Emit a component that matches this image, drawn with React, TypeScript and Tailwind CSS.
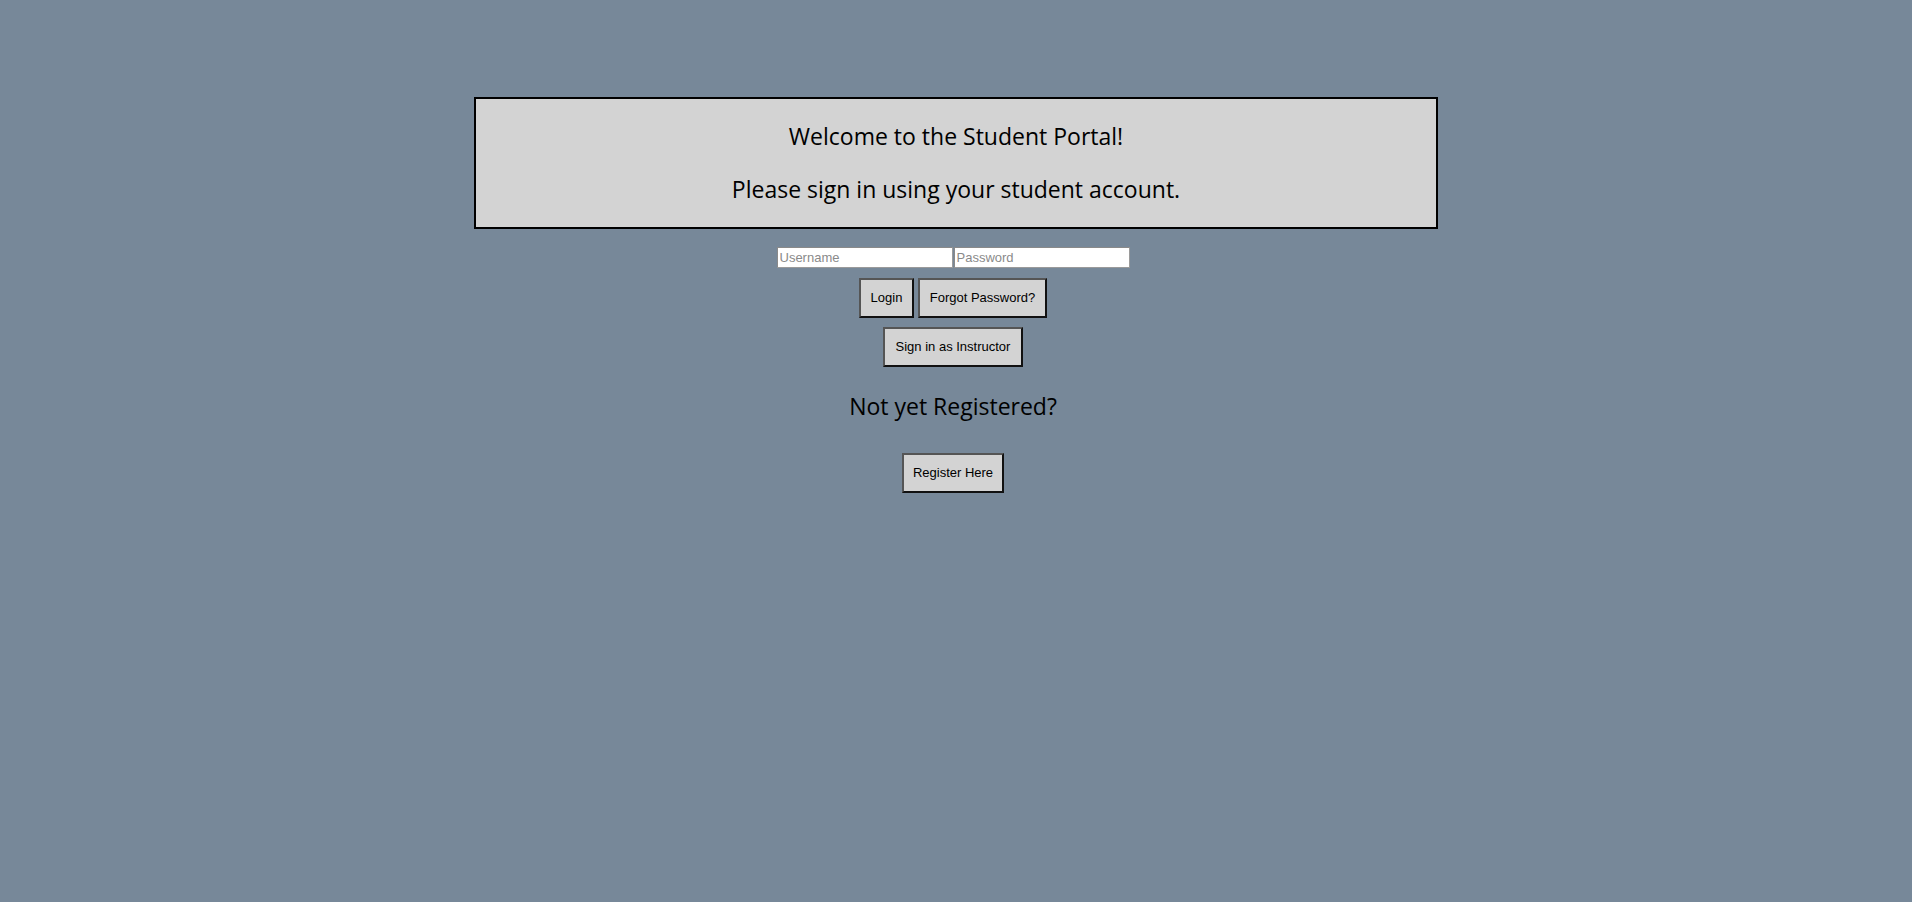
import React from "react";

export default function App() {
  const btn =
    "bg-[#d3d3d3] text-black text-[13px] px-[6px] h-[40px] border-2 border-t-[#555] border-l-[#555] border-b-[#111] border-r-[#111] font-['Liberation_Sans',Arial,sans-serif] whitespace-nowrap";
  const inp =
    "w-[176px] h-[21px] bg-white border border-t-[#8a8a8a] border-l-[#8a8a8a] border-b-[#9a9a9a] border-r-[#9a9a9a] px-[2px] text-[13px] font-['Liberation_Sans',Arial,sans-serif] placeholder:text-[#8a8a8a] outline-none";
  return (
    <div className="min-h-screen w-full bg-[#778899] pt-[97px] font-['Open_Sans','DejaVu_Sans',sans-serif]">
      <div className="mx-auto w-[964px] h-[132px] border-2 border-black bg-[#d3d3d3] text-center text-[23px] text-black flex flex-col items-center pt-[24px]">
        <p className="leading-[26px]">Welcome to the Student Portal!</p>
        <p className="leading-[26px] mt-[27px]">Please sign in using your student account.</p>
      </div>
      <div className="flex flex-col items-center mt-[18px] pr-[6px]">
        <div className="flex gap-[1px]">
          <input placeholder="Username" className={inp} />
          <input type="password" placeholder="Password" className={inp} />
        </div>
        <div className="flex gap-[4px] mt-[10px]">
          <button className={`${btn} w-[55px]`}>Login</button>
          <button className={`${btn} w-[129px]`}>Forgot Password?</button>
        </div>
        <button className={`${btn} w-[140px] mt-[9px] h-[39px]`}>Sign in as Instructor</button>
        <p className="text-[23px] text-black mt-[26px] leading-[26px]">Not yet Registered?</p>
        <button className={`${btn} w-[102px] mt-[34px] h-[39px]`}>Register Here</button>
      </div>
    </div>
  );
}
